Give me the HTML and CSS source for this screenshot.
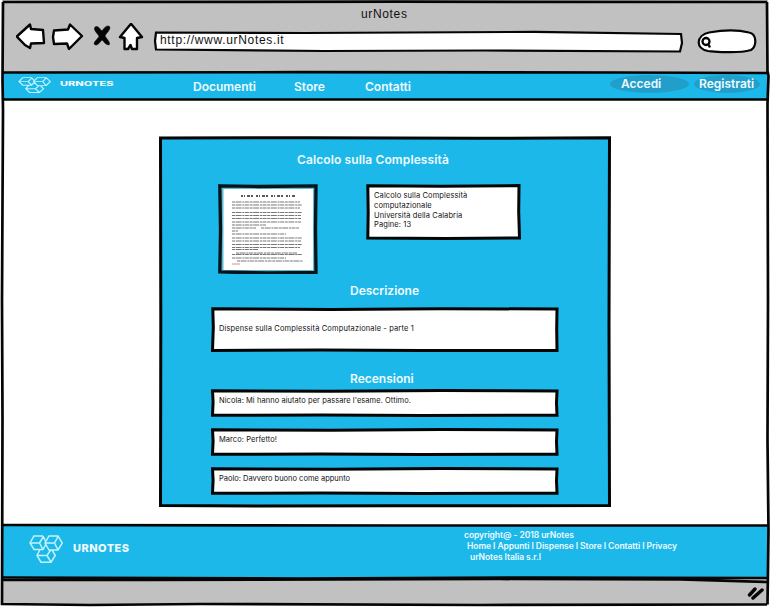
FILE: index.html
```html
<!DOCTYPE html>
<html lang="it">
<head>
<meta charset="utf-8">
<title>urNotes</title>
<link rel="stylesheet" href="styles.css">
</head>
<body>
<svg class="defs" width="0" height="0" aria-hidden="true">
  <symbol id="cubes" viewBox="0 0 34 28" preserveAspectRatio="none">
    <path d="M14 1H5L1 8 5 14.500H14L17 9M1 8H10.500L14.500 1.500M10.500 8 14 14.500M14 1 17 7M20 1H29L33.300 8 29 15H20L16 8ZM16 8H25.500L29 1.500M25.500 8 29 15M11 14.500 8 20.500 12 27.200H22L26.300 20.500 23 15M8 20.500H18L22 14.500M18 20.500 22 27.200"/>
  </symbol>
  <symbol id="row-frame" viewBox="0 0 348 28" preserveAspectRatio="none">
    <path d="M1.500 1.800 120 2.300 230 1.600 346 2 345.500 14 346 26.300 210 26.500 110 25.900 1.500 26.300 2.100 13Z"/>
  </symbol>
</svg>
<div class="window">
  <header class="chrome">
    <div class="window-title"><span>urNotes</span></div>
    <div class="toolbar">
      <svg class="controls" viewBox="0 0 128 32">
        <path d="M.8 13.500 14 1.500 15 6 27 7 28 20 15 20.500 14 25 9 22ZM38 7.500 52 6.500 54 1.500 66 13 53 26 51 20.500 38 21 37 14ZM115 .8 126 14 121 15V26H116L114.500 22 112 26H108.500V15L104 14Z"/>
        <path class="solid" d="M79 4C82 2 84 6 86 8 88 5 91 1 94 4 94 8 90 10 89 13 91 16 95 20 93 22 89 22 88 18 86 17 83 20 81 24 78 21 78 18 83 15 83 13 81 10 77 7 79 4Z"/>
      </svg>
      <div class="address">
        <svg class="frame" viewBox="0 0 529 21"><path d="M2 1.500 150 2 380 .900 527 3 528 12 526 20.500 330 19.500 170 20 2 18.500 1 10Z"/></svg>
        <span>http://www.urNotes.it</span>
      </div>
      <svg class="search" viewBox="0 0 60 25">
        <path d="M12 3.500C26 1 42 1 52 3.500 60 5 60 17 54 21 40 25 23 23 11 22-2 20-1 6 12 3.500Z"/>
        <path class="lens" d="M5.500 12.500a3.500 3.500 0 1 0 7 0a3.500 3.500 0 1 0-7 0M11 14.500 13 18.500"/>
      </svg>
    </div>
  </header>
  <nav class="nav">
    <svg class="logo-small"><use href="#cubes"/></svg>
    <span class="wordmark-small">URNOTES</span>
    <a class="n1">Documenti</a><a class="n2">Store</a><a class="n3">Contatti</a>
    <a class="pill accedi">Accedi</a><a class="pill registrati">Registrati</a>
  </nav>
  <main>
    <section class="panel">
      <svg class="frame" viewBox="0 0 452 371"><path d="M1.500 2 150 1.800 320 2.300 450.500 1.800 450 190 450.500 369.500 240 369.800 100 370 1.500 369.500 1.800 190Z"/></svg>
      <h1>Calcolo sulla Complessità</h1>
      <div class="summary">
        <div class="thumb">
          <svg viewBox="0 0 100 90">
            <path class="edge" d="M1.800 1.800 40 2.500 98 1.800 97.500 45 98 88.500 50 89 1.800 88 2.500 45Z"/>
            <path class="sheet" d="M5.500 5H95V86H5.500Z"/>
            <path class="heading" d="M23 12H77"/>
            <g class="print">
              <path d="M14 18H82M14 21H84M14 24H82M14 28.500H84M14 31.500H83M14 34.500H83M14 38H83M14 41H48M14 44H38M43 44H81M14 47H20M14 50H68M14 54H84M14 57H83M14 60.500H84M14 63.500H82M14 65.500H40M18 69H79M14 70.500H84M14 74H68M19 77H85"/>
            </g>
            <path class="red" d="M14 80H22"/>
          </svg>
        </div>
        <div class="info">
          <svg class="frame" viewBox="0 0 155 56"><path d="M1.800 1.800 75 2.300 153 1.600 152.700 28 153.500 54 80 54.500 1.800 54 2.200 28Z"/></svg>
          <p class="i1">Calcolo sulla Complessità</p><p class="i2">computazionale</p><p class="i3">Università della Calabria</p><p class="i4">Pagine: 13</p>
        </div>
      </div>
      <h2 class="h-desc">Descrizione</h2>
      <div class="box desc">
        <svg class="frame" viewBox="0 0 348 45"><path d="M1.800 1.800 120 2.400 230 1.700 346 2 345.700 22 346 43.500 210 43.500 110 43 1.500 43.500 2.300 20Z"/></svg>
        <span>Dispense sulla Complessità Computazionale - parte 1</span>
      </div>
      <h2 class="h-rec">Recensioni</h2>
      <div class="reviews">
        <div class="box"><svg class="frame"><use href="#row-frame"/></svg><span class="r1">Nicola: Mi hanno aiutato per passare l'esame. Ottimo.</span></div>
        <div class="box"><svg class="frame"><use href="#row-frame"/></svg><span class="r2">Marco: Perfetto!</span></div>
        <div class="box"><svg class="frame"><use href="#row-frame"/></svg><span class="r3">Paolo: Davvero buono come appunto</span></div>
      </div>
    </section>
  </main>
  <footer class="footer">
    <svg class="logo"><use href="#cubes"/></svg>
    <span class="wordmark">URNOTES</span>
    <div class="legal">
      <p class="l1">copyright@ - 2018 urNotes</p>
      <p class="l2">Home I Appunti I Dispense I Store I Contatti I Privacy</p>
      <p class="l3">urNotes Italia s.r.l</p>
    </div>
  </footer>
  <div class="status">
    <svg viewBox="0 0 18 16"><path d="M2.500 10 8 4M6 13 15 5"/></svg>
  </div>
  <svg class="outline" viewBox="0 0 770 607">
    <path d="M3 2 400 1.700 767 2M3 2 2.500 80 3 110 2 300 2.500 420 2 604 90 605 200 604 480 605 767 604.500M767 2 767.500 71 768.500 76 767.500 104 768 300 767.500 440 768.500 530 767.500 604.500"/>
    <path d="M3 72.500 300 72.200 620 72.500 768 73M3 99.500 767 99.500M3 525 400 525.500 768 525.500M3 577.500 300 578.500 530 577.500 768 578M3 580 150 580 500 579 680 579.500 767 582"/>
  </svg>
</div>
</body>
</html>
```
FILE: styles.css
```css
* { box-sizing: border-box; }
body { margin: 0; background: #fff; }
h1, h2, p { margin: 0; white-space: nowrap; }
.defs { position: absolute; }
svg { display: block; flex: none; }
.window {
  position: relative; width: 770px; height: 607px; padding: 0 2px 2px;
  display: flex; flex-direction: column; overflow: hidden;
  font-family: Inter, "Liberation Sans", sans-serif; color: #111;
}
.outline { position: absolute; inset: 0; width: 770px; height: 607px; fill: none; stroke: #050505; stroke-width: 2.7; pointer-events: none; }
.chrome { height: 73px; background: #c1c1c1; font-family: "Liberation Sans", Arial, sans-serif; }
.window-title { height: 29px; padding: 7px 0 0 359px; font-size: 12px; line-height: 15px; letter-spacing: .65px; }
.toolbar { display: flex; padding-left: 14px; }
.controls { width: 128px; height: 32px; margin-top: -6px; fill: #fff; stroke: #050505; stroke-width: 2.4; stroke-linejoin: round; }
.controls .solid { fill: #050505; stroke-width: .5; }
.address { position: relative; width: 529px; height: 21px; margin: 2px 0 0 10px; padding: 1px 0 0 6px; font-size: 12px; line-height: 16px; letter-spacing: .68px; }
.address, .info, .box { isolation: isolate; }
.frame { position: absolute; inset: 0; width: 100%; height: 100%; z-index: -1; fill: #fff; stroke: #050505; stroke-width: 3; overflow: visible; }
.address .frame { stroke-width: 2.2; }
.search { width: 60px; height: 25px; margin: 0 0 0 14px; fill: #fff; stroke: #050505; stroke-width: 2.2; }
.search .lens { fill: none; stroke-width: 2.3; }
.nav { height: 27px; display: flex; background: #1cb8ea; color: #effbff; padding-left: 16px; font-size: 12px; font-weight: 600; line-height: 16px; }
.nav a { margin-top: 6px; white-space: nowrap; }
.logo-small, .logo { fill: none; stroke: #bff3ff; stroke-width: 1.5; }
.logo-small { width: 33px; height: 16px; margin-top: 4px; }
.wordmark-small { width: 54px; margin: 3px 79px 0 9px; font-size: 6px; font-weight: 800; transform: scaleX(1.84); transform-origin: left; }
.nav .n1 { width: 101px; }
.nav .n2 { width: 71px; }
.nav .n3 { width: 245px; }
.nav .pill { height: 18px; margin-top: 2px; border-radius: 50%; background: #219fca; line-height: 17px; }
.nav .accedi { width: 79px; padding-left: 11px; }
.nav .registrati { width: 66px; margin-left: 5px; padding-left: 5px; }
main { height: 425px; padding: 36px 0 0 157px; }
.panel { position: relative; isolation: isolate; width: 452px; height: 371px; padding-top: 16px; }
.panel > .frame { fill: #1cb8ea; }
h1, h2 { color: #effbff; font-size: 12px; line-height: 16px; font-weight: 600; }
h1 { padding-left: 138px; letter-spacing: .12px; }
.summary { display: flex; gap: 48px; padding: 16px 0 0 59px; }
.thumb svg { width: 100px; height: 90px; fill: none; }
.thumb .edge { fill: #5db9d2; stroke: #05141a; stroke-width: 3.3; }
.thumb .sheet { fill: #fff; }
.thumb .heading { stroke: #222; stroke-width: 1.6; stroke-dasharray: 2 1 1 2 3 1 2 3; }
.print { stroke: #777; stroke-width: 1; stroke-dasharray: 3 .6 6 .8 2 .5 4 .7; }
.thumb .red { stroke: #b66; stroke-width: .7; }
.info { position: relative; width: 155px; height: 56px; padding: 7px 0 0 8px; font-size: 7.5px; line-height: 9.8px; letter-spacing: .1px; }
.h-desc { padding: 9px 0 0 191px; }
.box { position: relative; width: 348px; height: 28px; padding: 7px 0 0 8px; font-size: 7.5px; line-height: 10px; letter-spacing: .06px; white-space: nowrap; }
.desc { height: 45px; margin: 8px 0 0 52px; padding-top: 17px; letter-spacing: .13px; }
.h-rec { padding: 19px 0 0 191px; }
.reviews { display: flex; flex-direction: column; gap: 11px; padding: 2px 0 0 52px; }
.reviews .r3 { letter-spacing: 0; }
.footer { height: 53px; display: flex; background: #1cb8ea; color: #effbff; }
.logo { width: 34px; height: 28px; margin: 10px 0 0 27px; }
.wordmark { width: 57px; margin: 14px 334px 0 10px; font-size: 11px; line-height: 18px; font-weight: 800; letter-spacing: .45px; }
.legal { padding-top: 5px; font-size: 8.5px; line-height: 11px; font-weight: 600; letter-spacing: -.06px; }
.legal .l2 { padding-left: 3px; }
.legal .l3 { padding-left: 6px; }
.status { flex: 1; display: flex; justify-content: flex-end; padding: 7px 3px 0 0; background: #c1c1c1; }
.status svg { width: 18px; height: 16px; fill: none; stroke: #050505; stroke-width: 3.4; stroke-linecap: round; }
```
